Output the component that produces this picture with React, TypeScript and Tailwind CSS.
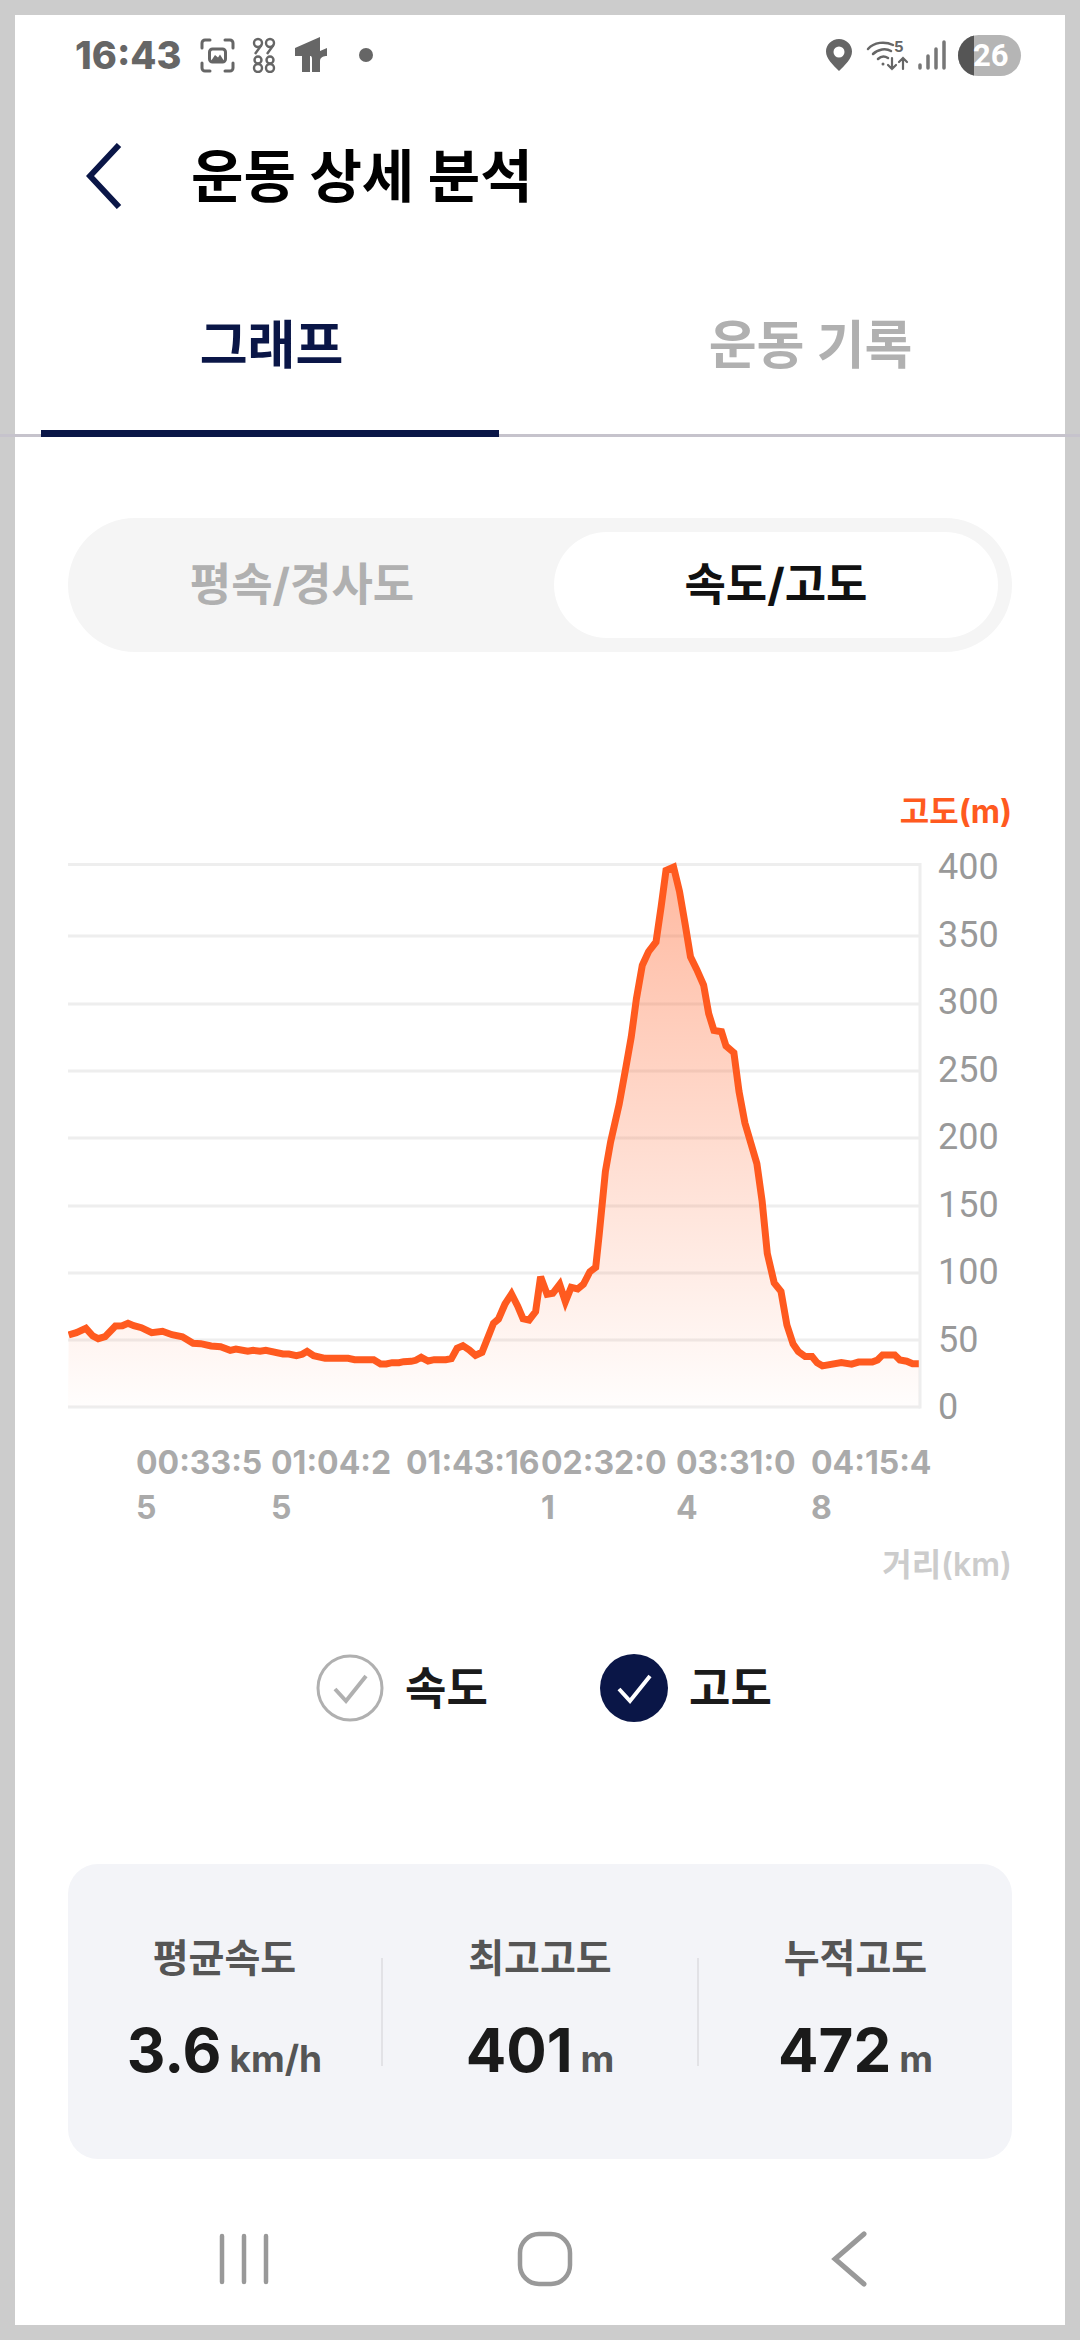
import type {FC} from 'react';

// points read off the reference, in page pixels
const lowPart = [
  [75, 465], [95, 458], [120, 445], [138, 468], [152, 476], [170, 470], [197, 438], [215, 437], [230, 430], [245, 437],
  [265, 443], [292, 458], [320, 454], [345, 464], [372, 470], [400, 490], [420, 491], [447, 498], [472, 500], [497, 511],
  [512, 507], [543, 514], [557, 511], [575, 514], [590, 511], [635, 522], [650, 522], [670, 527], [685, 523], [698, 514],
  [715, 527], [745, 535], [805, 535], [822, 539], [872, 539], [890, 552], [905, 552], [920, 548], [938, 548], [950, 545],
  [970, 544], [982, 541], [996, 532], [1014, 543], [1030, 539], [1060, 539], [1075, 536], [1090, 505], [1105, 497],
  [1122, 510], [1138, 526], [1155, 517], [1185, 430], [1198, 417], [1215, 372], [1232, 342], [1248, 378], [1262, 416],
  [1278, 420], [1295, 395], [1308, 290], [1325, 343], [1340, 340], [1358, 313], [1373, 365], [1388, 322], [1405, 327],
  [1420, 313], [1437, 275], [1452, 262]
].map(([x, y]) => [40 + x / 2.613, 1180 + y / 3]);

const peakPart = [
  [172, 1080], [190, 930], [205, 860], [230, 770], [250, 680], [265, 610], [280, 520], [297, 440], [315, 408], [337, 385],
  [352, 300], [366, 215], [388, 207], [405, 265], [422, 345], [437, 420], [455, 450], [475, 487], [490, 555], [505, 595],
  [527, 598], [540, 632], [563, 648], [578, 740], [595, 815], [630, 912], [645, 1000], [660, 1125], [680, 1195], [700, 1215],
  [717, 1295], [735, 1340], [750, 1358], [770, 1370], [790, 1370], [805, 1385], [820, 1392], [875, 1384], [905, 1388],
  [925, 1383], [965, 1383], [980, 1378], [995, 1366], [1030, 1366], [1045, 1378], [1065, 1381], [1082, 1387], [1100, 1387]
].map(([x, y]) => [540 + x / 2.904, 780 + y / 2.376]);

const line = [...lowPart, ...peakPart].map(([x, y]) => `${x.toFixed(1)},${y.toFixed(1)}`).join(' ');
const gridYs = [864.5, 936, 1004, 1071, 1138, 1206, 1273, 1340, 1407];
const yLabels = ['400', '350', '300', '250', '200', '150', '100', '50', '0'];
const xLabels = ['00:33:55', '01:04:25', '01:43:16', '02:32:01', '03:31:04', '04:15:48'];

const StatusBar: FC = () => (
  <div className="flex h-[76px] items-center justify-between pl-[60px] pr-[44px] pt-[4px] text-[#666666]">
    <div className="flex items-center">
      <span className="w-[125px] text-[38px] leading-none font-extrabold">16:43</span>
      <svg width="35" height="35" viewBox="0 0 35 35" fill="none" stroke="#666666" strokeWidth="3">
        <path d="M2 10V5a3 3 0 0 1 3-3h5M25 2h5a3 3 0 0 1 3 3v5M33 25v5a3 3 0 0 1-3 3h-5M10 33H5a3 3 0 0 1-3-3v-5" strokeLinecap="round" />
        <rect x="9.500" y="11" width="16" height="13" rx="3" strokeWidth="3" />
        <path d="M11 23l4-6 3 2.500 2-3 4 6.500z" fill="#666666" stroke="none" />
      </svg>
      <svg className="ml-[17px]" width="24" height="36" viewBox="0 0 24 36" fill="none" stroke="#666666" strokeWidth="2.400">
        <circle cx="6" cy="6" r="4" />
        <circle cx="18" cy="6" r="4" />
        <path d="M9.500 8L3 17M21.500 8L15 17" />
        <circle cx="6" cy="23" r="3.500" />
        <circle cx="18" cy="23" r="3.500" />
        <circle cx="6" cy="31" r="4" />
        <circle cx="18" cy="31" r="4" />
      </svg>
      <svg className="ml-[19px]" width="33" height="36" viewBox="0 0 33 36" fill="#666666">
        <path d="M0 11L25 0V35H17V22C17 19 16 19 15 19V35H7V19H0Z" />
        <path d="M25 14L32 11V19C29 19 25 20 25 24Z" />
      </svg>
      <span className="ml-[31px] h-[14px] w-[14px] rounded-full bg-[#666666]" />
    </div>
    <div className="flex items-center">
      <svg width="26" height="32" viewBox="0 0 26 32" fill="#666666">
        <path fillRule="evenodd" d="M13 0C5.800 0 0 5.600 0 12.600C0 20 7 26 13 32C19 26 26 20 26 12.600C26 5.600 20.200 0 13 0ZM13 7.500A5.500 5.500 0 1 1 13 18.500A5.500 5.500 0 0 1 13 7.500Z" />
      </svg>
      <svg className="ml-[14px] overflow-visible" width="42" height="32" viewBox="0 0 42 32" fill="none" stroke="#666666" strokeWidth="2.500" strokeLinecap="round">
        <path d="M2 10C8 3 19 2 27 6M7 15C12 10 20 9 25 12M12 20C15 17 19 17 22 19" />
        <circle cx="17" cy="25" r="1.500" fill="#666666" stroke="none" />
        <text x="28" y="13" fill="#666666" stroke="none" fontSize="15" fontWeight="700">5</text>
        <path d="M26 19V30M22 26l4 4 4-4M37 30V19M33 23l4-4 4 4" strokeWidth="2.200" />
      </svg>
      <svg className="ml-[10px]" width="28" height="30" viewBox="0 0 28 30" fill="none" stroke="#777777" strokeWidth="3.500" strokeLinecap="round">
        <path d="M2 28V25M10 28V16M18 28V9M26 28V2" />
      </svg>
      <div className="relative ml-[12px] flex h-[41px] w-[63px] items-center overflow-hidden rounded-full bg-[#b5b5b5]">
        <span className="absolute top-0 bottom-0 left-0 w-[16px] bg-[#555555]" />
        <span className="relative pl-[15px] font-['Roboto',sans-serif] text-[31px] leading-[41px] font-bold text-white">26</span>
      </div>
    </div>
  </div>
);

const Chart: FC = () => (
  <svg width="854" height="548" viewBox="68 862 854 548" className="shrink-0">
    <defs>
      <linearGradient id="elevationFill" x1="0" y1="0" x2="0" y2="1">
        <stop offset="0" stopColor="#ff5a1f" stopOpacity="0.42" />
        <stop offset="1" stopColor="#ff5a1f" stopOpacity="0.01" />
      </linearGradient>
    </defs>
    {gridYs.map(y => (
      <line key={y} x1="68" x2="920" y1={y} y2={y} stroke="#eeeeee" strokeWidth="3" />
    ))}
    <line x1="920" x2="920" y1="863" y2="1408.500" stroke="#eeeeee" strokeWidth="3" />
    <polygon points={`68,1407 ${line} 919,1407`} fill="url(#elevationFill)" />
    <polyline points={line} fill="none" stroke="#ff5a1f" strokeWidth="7" strokeLinejoin="miter" />
  </svg>
);

const Stat: FC<{label: string; value: string; unit: string; className?: string}> = ({label, value, unit, className}) => (
  <div className={`flex h-[142px] flex-col items-center ${className ?? ''}`}>
    <span className="mt-[-3px] text-[39px] leading-[40px] font-bold text-[#555555]">{label}</span>
    <div className="mt-[42px] flex items-baseline gap-[8px]">
      <span className="text-[60px] leading-[60px] font-bold text-[#1a1a1a]">{value}</span>
      <span className="text-[37px] leading-[60px] font-bold text-[#555555]">{unit}</span>
    </div>
  </div>
);

const App: FC = () => {
  return (
    <div className="h-[2340px] w-[1080px] bg-[#cccccc] p-[15px] font-['Inter','Noto_Sans_CJK_KR',sans-serif]">
      <div className="flex h-[2310px] w-[1050px] flex-col bg-white">
        <StatusBar />

        <div className="flex h-[170px] items-center pl-[71px]">
          <svg width="36" height="66" viewBox="0 0 36 66" fill="none" stroke="#0a1647" strokeWidth="6">
            <path d="M33 2L4 33L33 64" />
          </svg>
          <h1 className="ml-[69px] text-[57px] leading-none font-bold text-black">운동 상세 분석</h1>
        </div>

        <div className="flex h-[173px] items-center text-[52px] font-bold">
          <div className="w-1/2 pr-[12px] pb-[4px] text-center text-[#0a1647]">그래프</div>
          <div className="w-1/2 pb-[4px] pl-[16px] text-center text-[#b0b0b0]">운동 기록</div>
        </div>
        <div className="relative -mx-[15px] h-[3px] bg-[#c6c3cc]">
          <div className="absolute top-[-4px] left-[41px] h-[7px] w-[458px] bg-[#0a1647]" />
        </div>

        <div className="px-[53px]">
          <div className="mt-[81px] flex h-[134px] items-center rounded-full bg-[#f5f5f5] p-[14px] text-[45px] font-bold">
            <div className="flex-1 pr-[32px] text-center text-[#b0b0b0]">평속/경사도</div>
            <div className="flex h-[106px] w-[444px] items-center justify-center rounded-full bg-white text-[#111111]">속도/고도</div>
          </div>

          <div className="mt-[140px] text-right text-[32px] leading-[40px] font-bold text-[#ff5a1f]">고도(m)</div>
          <div className="mt-[30px] flex items-start">
            <Chart />
            <div className="mt-[-17px] ml-[16px] flex h-[584px] flex-col justify-between font-['Roboto','Noto_Sans_CJK_KR',sans-serif] text-[36px] leading-[44px] text-[#999999]">
              {yLabels.map(label => (
                <span key={label}>{label}</span>
              ))}
            </div>
          </div>

          <div className="mt-[11px] ml-[68px] flex text-[32px] leading-[45px] font-bold text-[#aaaaaa]">
            {xLabels.map(label => (
              <div key={label} className="w-[135px] break-all">{label}</div>
            ))}
          </div>
          <div className="mt-[15px] text-right text-[32px] leading-[40px] font-semibold text-[#cccccc]">거리(km)</div>

          <div className="mt-[69px] ml-[248px] flex items-center">
            <svg width="68" height="68" viewBox="0 0 68 68" fill="none">
              <circle cx="34" cy="34" r="32" stroke="#b0b0b0" strokeWidth="3" />
              <path d="M19 35L30 47L50 22" stroke="#b0b0b0" strokeWidth="4" />
            </svg>
            <span className="ml-[21px] w-[195px] text-[45px] leading-none font-bold text-[#1a1a1a]">속도</span>
            <svg width="68" height="68" viewBox="0 0 68 68" fill="none">
              <circle cx="34" cy="34" r="34" fill="#0a1647" />
              <path d="M19 35L30 47L50 22" stroke="#ffffff" strokeWidth="4" />
            </svg>
            <span className="ml-[21px] text-[45px] leading-none font-bold text-[#1a1a1a]">고도</span>
          </div>

          <div className="mt-[142px] flex h-[295px] items-center rounded-[30px] bg-[#f3f4f8]">
            <Stat label="평균속도" value="3.6" unit="km/h" className="w-[313px]" />
            <div className="h-[108px] w-[2px] bg-[#e2e2e6]" />
            <Stat label="최고고도" value="401" unit="m" className="w-[314px]" />
            <div className="h-[108px] w-[2px] bg-[#e2e2e6]" />
            <Stat label="누적고도" value="472" unit="m" className="flex-1" />
          </div>
        </div>

        <div className="mt-[70px] flex h-[60px] items-center pl-[204px]">
          <svg width="50" height="52" viewBox="0 0 50 52" fill="none" stroke="#999999" strokeWidth="4.500" strokeLinecap="round">
            <path d="M3 3V49M25 3V49M47 3V49" />
          </svg>
          <svg className="ml-[248px]" width="56" height="56" viewBox="0 0 56 56" fill="none" stroke="#999999" strokeWidth="4.500">
            <rect x="3" y="3" width="50" height="50" rx="19" />
          </svg>
          <svg className="ml-[258px]" width="36" height="56" viewBox="0 0 36 56" fill="none" stroke="#999999" strokeWidth="5" strokeLinecap="round">
            <path d="M33 3L4 28L33 53" />
          </svg>
        </div>
      </div>
    </div>
  );
};

export default App;
